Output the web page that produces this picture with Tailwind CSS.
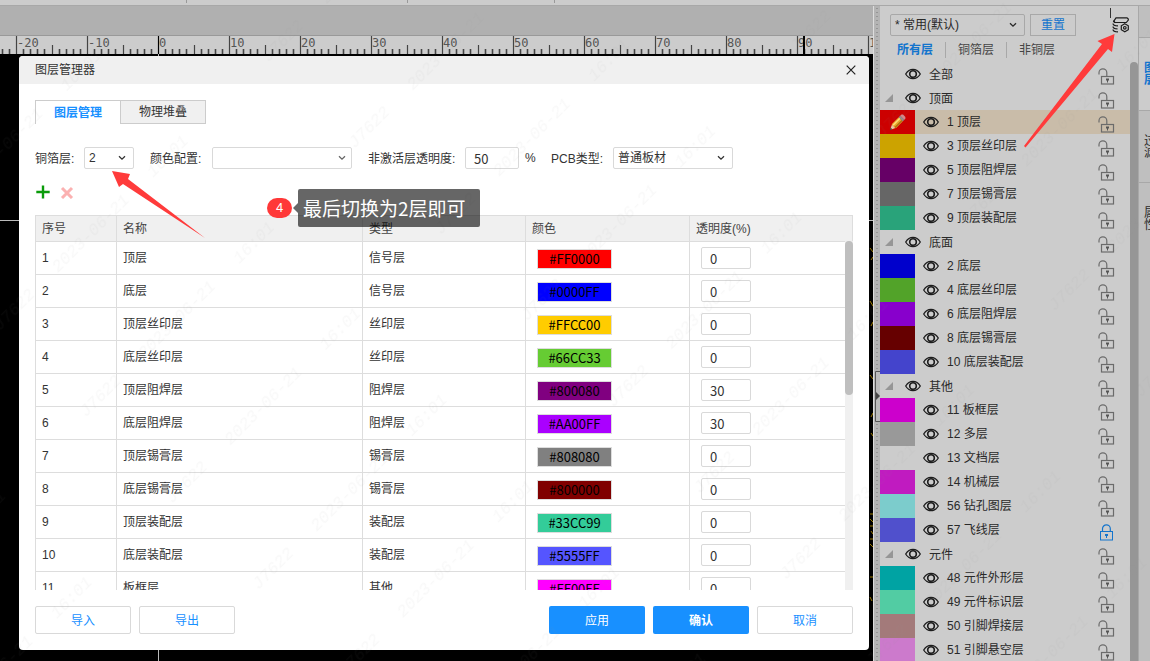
<!DOCTYPE html>
<html lang="zh-CN">
<head>
<meta charset="utf-8">
<meta name="viewport" content="width=device-width, initial-scale=1">
<title>图层管理器</title>
<script src="https://cdn.jsdelivr.net/npm/@tailwindcss/browser@4"></script>
</head>
<body class="font-['Liberation_Sans','Noto_Sans_CJK_SC',sans-serif] text-xs text-[#333]">

<svg class="hidden" aria-hidden="true">
  <symbol id="eye" viewBox="0 0 16 12"><path d="M.7 6C2.6 2.8 5 1.3 8 1.3S13.400 2.800 15.300 6C13.400 9.200 11 10.700 8 10.700S2.600 9.200.7 6Z" fill="none" stroke="#1c1c1c" stroke-width="1.300"/><circle cx="8" cy="6" r="3.300" fill="none" stroke="#1c1c1c" stroke-width="1.600"/></symbol>
  <symbol id="unlocked" viewBox="0 0 17 17"><path d="M1 6.500V4.800a3.900 3.900 0 0 1 7.800 0V8" fill="none" stroke="#6b6b6b" stroke-width="1.200"/><rect x="3.500" y="8.500" width="12" height="7.500" fill="none" stroke="#6b6b6b" stroke-width="1.200"/><path d="M8 10.500h3v2h-1v2H9v-2H8z" fill="#555"/></symbol>
  <symbol id="locked" viewBox="0 0 17 17"><path d="M4.500 7.500V4.800a3.900 3.900 0 0 1 7.800 0v2.700" fill="none" stroke="#1374cc" stroke-width="1.200"/><rect x="2.500" y="7.500" width="12" height="8.500" fill="none" stroke="#1374cc"/><path d="M7 10h3v2h-1v2H8v-2H7z" fill="#1374cc"/></symbol>
  <symbol id="chev" viewBox="0 0 8 6"><path d="M1 1.200 4 4.200 7 1.200" fill="none" stroke="currentColor" stroke-width="1.300"/></symbol>
</svg>

<div class="relative flex h-screen flex-col overflow-hidden bg-[#ccc]">
  <header class="flex h-[6px] shrink-0 border-b border-[#a8a8a8]">
    <span class="h-[3px] w-[187px] border-r border-[#999]"></span>
    <span class="h-[3px] w-[221px] border-r border-[#999]"></span>
    <span class="h-[3px] w-[147px] border-r border-[#999]"></span>
  </header>

  <main class="flex min-h-0 flex-1">
    <section class="flex min-w-0 flex-1 flex-col bg-black" aria-label="画布">
      <div class="h-[30px] shrink-0 border-b border-[#999] bg-[#b0b0b0]"></div>
      <svg id="ruler" class="block h-[18px] w-full shrink-0 bg-[#ccc]"></svg>
      <svg class="block min-h-0 w-full flex-1">
        <path d="M158.500 0V700M0 166.500H900" stroke="#bbb" fill="none"/>
        <path d="M870 194l3 4m-2 8 2-3m-3 44 3 5m-2 20 2-4m-3 53 3 4m-2 38 2-4m-2 20 2 3m-3 78h3m-3 5 3 3m-3 4h3m-2 5 2 3m-3 5h3m-3 5 3 3m-3 30h3m-3 20 2 4" stroke="#9c7a00" fill="none"/>
      </svg>
    </section>

    <div class="flex w-[7px] shrink-0 flex-col border-l border-[#ddd] bg-[#b4b4b4]">
      <svg class="h-full w-full"><path d="M3 2V700" stroke="#777" stroke-dasharray="1 3"/><path d="M6.500 365.500H1.500V415.500H6.500" fill="#bbb" stroke="#555"/><path d="M2 386 6 390 2 394Z" fill="#444"/></svg>
    </div>

    <aside class="flex w-[258px] shrink-0 flex-col text-[#292929]" aria-label="图层">
      <div class="flex shrink-0 items-center pt-2 pl-[10px]">
        <div class="relative">
          <select aria-label="图层配置" class="block h-[22px] w-[135px] appearance-none rounded-xs border border-[#a8a8a8] bg-transparent pl-1 leading-5"><option>* 常用(默认)</option></select>
          <svg class="pointer-events-none absolute top-2 right-2 h-[6px] w-2"><use href="#chev"/></svg>
        </div>
        <button class="ml-[5px] h-[22px] w-[46px] border border-[#a8a8a8] leading-5 text-[#1374cc]">重置</button>
        <button aria-label="图层管理器" class="ml-9"><svg class="block h-4 w-[18px]" viewBox="0 0 18 16" fill="none" stroke="#1c1c1c" stroke-width="1.200"><path d="M4 .8h11l1.300 1.200v1l-2 2.500H3L1.600 4.300z"/><path d="M2 3.500v1.200l1 .9"/><path d="M1 6.500c0 2 1.500 2.400 5 2.400M1 9.500c0 2 1.500 2.400 4.500 2.400M1 12.500c0 2 1.500 2.400 5 2.400"/><path d="M12.800 6.800 16.300 8.800v3.900l-3.500 2-3.500-2V8.800z"/><circle cx="12.800" cy="10.800" r="1.300"/></svg></button>
      </div>
      <nav class="flex h-[26px] shrink-0 items-center pt-px pl-[5px] leading-4">
        <a href="#" class="px-3 font-bold text-[#1374cc]">所有层</a>
        <a href="#" class="border-l border-[#a8a8a8] px-3 text-[#444]">铜箔层</a>
        <a href="#" class="border-l border-[#a8a8a8] px-3 text-[#444]">非铜层</a>
      </nav>
      <div class="flex min-h-0 flex-1">
        <ul id="layers" class="min-w-0 flex-1 overflow-hidden"></ul>
        <div class="w-2 rounded-t bg-[#969696]"></div>
      </div>
    </aside>

    <nav class="flex w-3 shrink-0 flex-col overflow-hidden border-l border-[#a8a8a8] bg-[#bfbfbf] leading-3 text-[#292929]" aria-label="侧栏">
      <div class="h-8 shrink-0 border-b border-[#a8a8a8]"></div>
      <a href="#" class="flex h-[73px] w-[17px] items-center border-b border-[#a8a8a8] bg-[#ccc] pl-[5px] font-bold text-[#1374cc]">图<br>层</a>
      <a href="#" class="flex h-[72px] w-[17px] items-center border-b border-[#a8a8a8] pl-[5px]">过<br>滤</a>
      <a href="#" class="flex h-[72px] w-[17px] items-center pl-[5px]">属<br>性</a>
    </nav>
  </main>

  <section role="dialog" aria-labelledby="dlg" class="absolute top-14 left-[19px] flex w-[850px] flex-col overflow-hidden rounded bg-white">
    <div class="flex h-7 items-center justify-between bg-[#f0f0f0] px-4">
      <h1 id="dlg">图层管理器</h1>
      <button aria-label="关闭" class="-mr-[7px] p-1"><svg class="h-[10px] w-[10px]" viewBox="0 0 10 10"><path d="M.7.7l8.600 8.600M9.300.7.7 9.300" stroke="#222" stroke-width="1.200"/></svg></button>
    </div>

    <div class="px-4 pt-4 pb-4">
      <div role="tablist" class="flex">
        <button role="tab" aria-selected="true" class="h-6 w-[85px] border-t border-l border-[#ccc] font-bold text-[#1890ff]">图层管理</button>
        <button role="tab" aria-selected="false" class="h-6 w-[86px] border border-[#ccc] bg-[#f0f0f0]">物理堆叠</button>
      </div>

      <form class="mt-[23px] flex h-[22px] items-center">
        <label for="cu" class="w-[49px] pt-px">铜箔层:</label>
        <div class="relative">
          <select id="cu" class="block h-[22px] w-[50px] appearance-none rounded-xs border border-[#d9d9d9] pl-1 leading-5"><option>2</option></select>
          <svg class="pointer-events-none absolute top-2 right-2 h-[6px] w-2"><use href="#chev"/></svg>
        </div>
        <label for="cc" class="ml-4 w-[62px] pt-px">颜色配置:</label>
        <div class="relative">
          <select id="cc" class="block h-[22px] w-[140px] appearance-none rounded-xs border border-[#d9d9d9]"><option></option></select>
          <svg class="pointer-events-none absolute top-2 right-[6px] h-[6px] w-2 text-[#666]"><use href="#chev"/></svg>
        </div>
        <label for="op" class="ml-4 w-[97px] pt-px">非激活层透明度:</label>
        <input id="op" value="50" class="h-[22px] w-[54px] rounded-xs border border-[#d9d9d9] pl-2 font-['Noto_Sans_CJK_SC',sans-serif] text-[13px]">
        <span class="ml-[6px] w-[26px]">%</span>
        <label for="pcb" class="w-[62px] pt-px">PCB类型:</label>
        <div class="relative">
          <select id="pcb" class="block h-[22px] w-[120px] appearance-none rounded-xs border border-[#d9d9d9] pl-1 leading-5"><option>普通板材</option></select>
          <svg class="pointer-events-none absolute top-2 right-2 h-[6px] w-2"><use href="#chev"/></svg>
        </div>
      </form>

      <div class="mt-4 flex h-[14px] items-center gap-[10px] pl-px">
        <button aria-label="添加"><svg class="block h-[14px] w-[14px]" viewBox="0 0 14 14"><path d="M7 .5v13M.3 7h13.400" stroke="#0a9b0a" stroke-width="2.400"/></svg></button>
        <button aria-label="删除" disabled><svg class="block h-[14px] w-[14px]" viewBox="0 0 14 14"><path d="M2 3l10 10M12 3 2 13" stroke="#fbb1b1" stroke-width="3"/></svg></button>
      </div>

      <table class="mt-4 w-full table-fixed border-collapse text-left text-[#444]">
        <colgroup><col class="w-[81px]"><col class="w-[246px]"><col class="w-[163px]"><col class="w-[164px]"><col></colgroup>
        <thead><tr class="h-[26px] bg-[#f0f0f0]">
          <th class="border border-[#ddd] px-[6px] font-normal">序号</th><th class="border border-[#ddd] px-[6px] font-normal">名称</th><th class="border border-[#ddd] px-[6px] font-normal">类型</th><th class="border border-[#ddd] px-[6px] font-normal">颜色</th><th class="border border-[#ddd] px-[6px] font-normal">透明度(%)</th>
        </tr></thead>
      </table>
      <div class="-mt-px flex h-[349px] overflow-hidden">
        <div class="min-w-0 flex-1">
          <table class="w-full table-fixed border-collapse border-t border-[#ddd] text-[#333]">
            <colgroup><col class="w-[81px]"><col class="w-[246px]"><col class="w-[163px]"><col class="w-[164px]"><col></colgroup>
            <tbody id="rows"></tbody>
          </table>
        </div>
        <div class="w-2 bg-[#f0f0f0]"><div class="h-[154px] rounded bg-[#bfbfbf]"></div></div>
      </div>

      <div class="mt-4 flex gap-2">
        <button class="h-7 w-24 rounded-xs border border-[#d9d9d9] pt-px text-[#1890ff]">导入</button>
        <button class="mr-auto h-7 w-24 rounded-xs border border-[#d9d9d9] pt-px text-[#1890ff]">导出</button>
        <button class="h-7 w-24 rounded-xs bg-[#1890ff] pt-px text-white">应用</button>
        <button class="h-7 w-24 rounded-xs bg-[#1890ff] pt-px font-bold text-white">确认</button>
        <button class="h-7 w-24 rounded-xs border border-[#d9d9d9] pt-px text-[#1890ff]">取消</button>
      </div>
    </div>
  </section>

  <svg class="pointer-events-none absolute inset-0 h-full w-full" aria-hidden="true">
    <defs>
      <pattern id="wm" width="380" height="122" patternUnits="userSpaceOnUse" patternTransform="rotate(-45) translate(100 50)">
        <g font-family="Liberation Mono, monospace" font-style="italic" font-size="17" fill="#808080" fill-opacity=".06" text-anchor="middle">
          <text x="71" y="62">J7622</text><text x="179" y="62">2023-06-21</text><text x="288" y="62">16:01</text>
        </g>
      </pattern>
    </defs>
    <rect width="100%" height="100%" fill="url(#wm)"/>
    <path d="M1110.500 8v10" stroke="#333"/>
    <path d="M112 171 130 174 128 179 205 238 123 184 119 187Z" fill="#ff3b3b"/>
    <path d="M1114.500 34 1097.500 41 1102 44 1024 146 1025.500 147.500 1108 49 1112 52Z" fill="#ff3b3b"/>
  </svg>

  <div class="absolute top-[189px] left-[267px] flex items-center">
    <span class="flex h-5 w-[25px] items-center justify-center rounded-full bg-[#ff3838] text-[13px] text-white">4</span>
    <svg class="ml-px h-[10px] w-[5px]" viewBox="0 0 5 10"><path d="M5 0V10L0 5Z" fill="#000" fill-opacity=".6"/></svg>
    <span class="flex h-[38px] w-[182px] items-center rounded-xs bg-black/60 pl-[5px] font-['Noto_Sans_CJK_SC',sans-serif] text-[19px] text-white">最后切换为2层即可</span>
  </div>
</div>

<script>
const layers = [
  ['全部'],
  ['顶面', 1],
  ['1 顶层', '#cc0000'], ['3 顶层丝印层', '#cca300'], ['5 顶层阻焊层', '#660066'], ['7 顶层锡膏层', '#666666'], ['9 顶层装配层', '#29a37a'],
  ['底面', 1],
  ['2 底层', '#0000cc'], ['4 底层丝印层', '#52a329'], ['6 底层阻焊层', '#8800cc'], ['8 底层锡膏层', '#660000'], ['10 底层装配层', '#4444cc'],
  ['其他', 1],
  ['11 板框层', '#cc00cc'], ['12 多层', '#999999'], ['13 文档层', '#cccccc'], ['14 机械层', '#c01bc0'], ['56 钻孔图层', '#7ccccc'], ['57 飞线层', '#5050cc'],
  ['元件', 1],
  ['48 元件外形层', '#00a3a3'], ['49 元件标识层', '#52cca3'], ['50 引脚焊接层', '#a37a7a'], ['51 引脚悬空层', '#cc7acc']
];
const pencil = '<svg class="h-[17px] w-[17px]" viewBox="0 0 17 17"><path d="M1 16 3 10.500 6.500 14Z" fill="#e8c9a0"/><path d="M1 16 1.800 13.800 3.200 15.200Z" fill="#222"/><path d="M2.700 10.200 9.700 3.200 13.800 7.300 6.800 14.300Z" fill="#e9a92c"/><path d="M4 11.300 11 4.300" stroke="#ffdf7a" stroke-width="1.400"/><path d="M6 13.500 13 6.500" stroke="#a86c10" stroke-width="1.200"/><path d="M9.700 3.200 11.200 1.700 15.300 5.800 13.800 7.300Z" fill="#8f8f8f"/><path d="M11.200 1.700 12.500.6H14L16.400 3V4.700L15.300 5.800Z" fill="#d08a8c"/></svg>';
document.getElementById('layers').innerHTML = layers.map(([name, mark], i) => {
  const child = typeof mark === 'string';
  const lead = child
    ? `<span class="mr-2 flex h-6 w-[35px] items-center justify-center" style="background:${mark}">${i === 2 ? pencil : ''}</span>`
    : `<span class="flex w-[25px] pl-[5px]">${mark ? '<svg class="h-2 w-2" viewBox="0 0 8 8"><path d="M8 0V8H0Z" fill="#969696"/></svg>' : ''}</span>`;
  const lock = name.startsWith('57') ? 'locked' : 'unlocked';
  return `<li class="flex h-6 items-center ${i === 2 ? 'bg-[#c9bca9]' : ''}">${lead}<button aria-label="显示 ${name}"><svg class="block h-3 w-4"><use href="#eye"/></svg></button><span class="ml-2 flex-1 ${child ? '' : 'pt-[2px]'}">${name}</span><button aria-label="锁定 ${name}" class="mt-1 mr-[15px]"><svg class="block h-[17px] w-[17px]"><use href="#${lock}"/></svg></button></li>`;
}).join('');

const rows = [
  ['顶层', '信号层', '#FF0000', 0], ['底层', '信号层', '#0000FF', 0], ['顶层丝印层', '丝印层', '#FFCC00', 0], ['底层丝印层', '丝印层', '#66CC33', 0],
  ['顶层阻焊层', '阻焊层', '#800080', 30], ['底层阻焊层', '阻焊层', '#AA00FF', 30], ['顶层锡膏层', '锡膏层', '#808080', 0], ['底层锡膏层', '锡膏层', '#800000', 0],
  ['顶层装配层', '装配层', '#33CC99', 0], ['底层装配层', '装配层', '#5555FF', 0], ['板框层', '其他', '#FF00FF', 0]
];
document.getElementById('rows').innerHTML = rows.map(([n, t, c, o], i) => `<tr class="h-[33px]">
  <td class="border-x border-b border-[#ddd] px-[6px] pb-px">${i + 1}</td>
  <td class="border-x border-b border-[#ddd] px-[6px] pb-px">${n}</td>
  <td class="border-x border-b border-[#ddd] px-[6px] pb-px">${t}</td>
  <td class="border-x border-b border-[#ddd] px-[11px] pt-[2px]"><button class="block h-5 w-[75px] border border-[#ddd] font-['Noto_Sans_CJK_SC',sans-serif] text-[13px] leading-[18px] text-black" style="background:${c}">${c}</button></td>
  <td class="border-b border-[#ddd] px-[11px]"><input aria-label="${n} 透明度" value="${o}" class="block h-[22px] w-[50px] rounded-xs border border-[#d9d9d9] pl-2 font-['Noto_Sans_CJK_SC',sans-serif] text-[13px]"></td>
</tr>`).join('');

// Ruler: ten ticks per labelled step, a taller one halfway.
let ruler = '';
for (let i = -22; i <= 100; i++) {
  const x = Math.round(158 + i * 7.1) + .5;
  const top = i % 10 === 0 ? 0 : i % 5 === 0 ? 9 : 13;
  ruler += `<path d="M${x} ${top}V18" stroke="${i === 0 ? '#000' : '#444'}" stroke-width="${i % 5 ? 1.6 : 1.2}"/>`;
  if (i % 10 === 0) ruler += `<text x="${x + .5}" y="11" font-family="DejaVu Sans Mono, monospace" font-size="12" fill="#555">${i}</text>`;
}
ruler += '<path d="M804 0V18" stroke="#000" stroke-width="2"/>';
document.getElementById('ruler').innerHTML = ruler;
</script>
</body>
</html>
